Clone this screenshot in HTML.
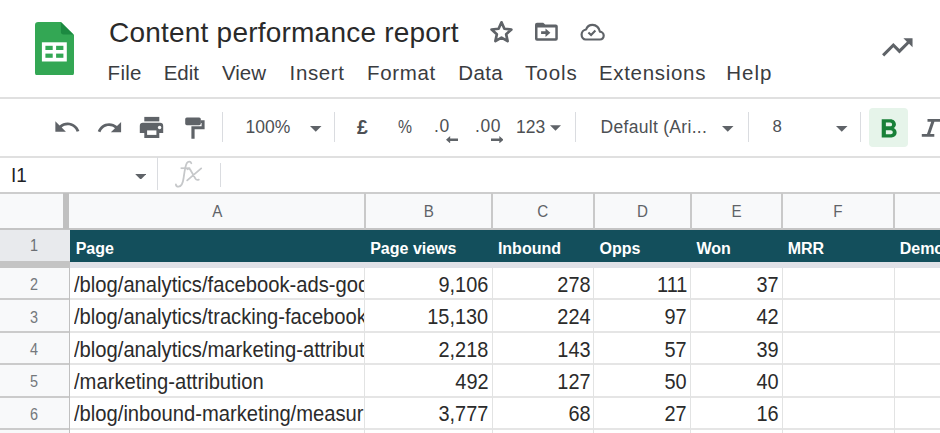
<!DOCTYPE html>
<html><head><meta charset="utf-8">
<style>
html,body{margin:0;padding:0;width:940px;height:433px;overflow:hidden;background:#fff;}
body{position:relative;font-family:"Liberation Sans",sans-serif;}
.t{position:absolute;line-height:1;white-space:nowrap;}
.r{position:absolute;display:block;}
#w{position:absolute;left:0;top:0;width:940px;height:433px;overflow:hidden;background:#fff;}
</style></head><body>
<div id="w"><svg class="r" style="left:35.2px;top:21.5px" width="39" height="53.8" viewBox="0 0 39 53.8">
<path d="M3.2 0 H25.9 L39 13 V50.6 Q39 53.8 35.8 53.8 H3.2 Q0 53.8 0 50.6 V3.2 Q0 0 3.2 0 Z" fill="#33a754"/>
<path d="M25.9 0 L39 13 V12.4 H28.5 Q25.9 12.4 25.9 9.8 Z" fill="#1c8a41"/>
<rect x="6.9" y="20.3" width="24.9" height="19.2" fill="#fff"/>
<rect x="10.4" y="23.8" width="7.3" height="4.2" fill="#33a754"/>
<rect x="21.1" y="23.8" width="7.3" height="4.2" fill="#33a754"/>
<rect x="10.4" y="31.6" width="7.3" height="4.2" fill="#33a754"/>
<rect x="21.1" y="31.6" width="7.3" height="4.2" fill="#33a754"/>
</svg>
<div class="t" style="left:109.00px;top:18.59px;font-size:28px;color:#2a2a2a;font-weight:normal;letter-spacing:0.22px;">Content performance report</div>
<svg class="r" style="left:486px;top:18px" width="32" height="28" viewBox="0 0 32 28">
<polygon points="15.50,4.30 18.38,10.74 25.39,11.49 20.16,16.21 21.61,23.11 15.50,19.60 9.39,23.11 10.84,16.21 5.61,11.49 12.62,10.74" fill="none" stroke="#5f6368" stroke-width="2.7" stroke-linejoin="round"/></svg>
<svg class="r" style="left:530px;top:18px" width="32" height="27" viewBox="0 0 32 27">
<path fill="#5f6368" d="M7 4.7 H13.2 L15.2 6.5 H25.8 Q27.8 6.5 27.8 8.5 V20.8 Q27.8 22.8 25.8 22.8 H7 Q5 22.8 5 20.8 V6.7 Q5 4.7 7 4.7 Z M7.5 9.4 V20.3 H25.3 V9.4 Z"/>
<path fill="#5f6368" d="M11.1 13.3 H15.5 V10.4 L20.4 14.65 L15.5 18.9 V16 H11.1 Z"/>
</svg>
<svg class="r" style="left:576px;top:18px" width="32" height="28" viewBox="0 0 32 28">
<path fill="none" stroke="#5f6368" stroke-width="2.2" stroke-linejoin="round" d="M9.6 21.5 H24 C26.1 21.5 27.7 19.8 27.7 17.6 C27.7 15.5 26 13.8 23.9 13.7 C23.4 9.9 20.3 6.9 16.6 6.9 C13.6 6.9 11 8.8 10.1 11.5 C7.6 11.8 5.6 14 5.6 16.6 C5.6 19.3 7.4 21.5 9.6 21.5 Z"/>
<path fill="none" stroke="#5f6368" stroke-width="2.1" d="M12.4 14.4 L15.1 17 L19.4 12.6"/>
</svg>
<div class="t" style="left:107.60px;top:63.04px;font-size:20.5px;color:#3a3c3f;font-weight:normal;letter-spacing:0.3px;">File</div>
<div class="t" style="left:163.70px;top:63.04px;font-size:20.5px;color:#3a3c3f;font-weight:normal;letter-spacing:0.0px;">Edit</div>
<div class="t" style="left:222.00px;top:63.04px;font-size:20.5px;color:#3a3c3f;font-weight:normal;letter-spacing:0.0px;">View</div>
<div class="t" style="left:289.60px;top:63.04px;font-size:20.5px;color:#3a3c3f;font-weight:normal;letter-spacing:0.6px;">Insert</div>
<div class="t" style="left:367.00px;top:63.04px;font-size:20.5px;color:#3a3c3f;font-weight:normal;letter-spacing:0.65px;">Format</div>
<div class="t" style="left:458.30px;top:63.04px;font-size:20.5px;color:#3a3c3f;font-weight:normal;letter-spacing:0.35px;">Data</div>
<div class="t" style="left:525.10px;top:63.04px;font-size:20.5px;color:#3a3c3f;font-weight:normal;letter-spacing:0.95px;">Tools</div>
<div class="t" style="left:598.90px;top:63.04px;font-size:20.5px;color:#3a3c3f;font-weight:normal;letter-spacing:0.7px;">Extensions</div>
<div class="t" style="left:726.30px;top:63.04px;font-size:20.5px;color:#3a3c3f;font-weight:normal;letter-spacing:0.95px;">Help</div>
<svg class="r" style="left:879.2px;top:28.6px" width="36.6" height="36.6" viewBox="0 0 24 24">
<path fill="#5f6368" d="M16 6l2.29 2.29-4.88 4.88-4-4L2 16.59 3.41 18l6-6 4 4 6.3-6.29L22 12V6z"/></svg>
<div class="r" style="left:0px;top:97.1px;width:940px;height:1.5px;background:#e0e0e0;"></div>
<div class="r" style="left:0px;top:156px;width:940px;height:1.5px;background:#e0e0e0;"></div>
<svg class="r" style="left:53.1px;top:113.1px" width="28.2" height="28.2" viewBox="0 0 24 24">
<path fill="#5f6368" d="M12.5 8c-2.65 0-5.05.99-6.9 2.6L2 7v9h9l-3.62-3.62c1.39-1.16 3.16-1.88 5.12-1.88 3.54 0 6.55 2.31 7.6 5.5l2.37-.78C21.08 11.03 17.15 8 12.5 8z"/></svg>
<svg class="r" style="left:96.2px;top:113.5px" width="27.4" height="27.4" viewBox="0 0 24 24">
<path fill="#5f6368" d="M18.4 10.6C16.55 8.99 14.15 8 11.5 8c-4.65 0-8.58 3.03-9.960 7.22L3.9 16c1.05-3.190 4.05-5.5 7.6-5.5 1.95 0 3.73.72 5.12 1.88L13 16h9V7l-3.6 3.6z"/></svg>
<svg class="r" style="left:139px;top:116px" width="26" height="23" viewBox="0 0 26 23">
<rect x="5.3" y="0.9" width="15" height="4.5" fill="#5f6368"/>
<path fill="#5f6368" d="M3.9 6.7 H21 Q24.2 6.7 24.2 9.9 V17 H20.3 V22 H5.3 V17 H0.8 V9.9 Q0.8 6.7 3.9 6.7 Z"/>
<rect x="8.1" y="14.4" width="9.3" height="4.5" fill="#fff"/>
<circle cx="20.6" cy="11.5" r="1.7" fill="#fff"/>
</svg>
<svg class="r" style="left:180px;top:112px" width="30" height="30" viewBox="0 0 30 30">
<rect x="5.2" y="5.5" width="15.6" height="7.7" rx="1.6" fill="#5f6368"/>
<path fill="#5f6368" d="M20.5 8.3 H24.6 V17.3 H14.6 V26.7 H11.4 V14.3 H21.6 V10.9 H20.5 Z"/>
</svg>
<div class="r" style="left:222px;top:112px;width:1px;height:30px;background:#dadce0;"></div>
<div class="t" style="left:245.50px;top:118.88px;font-size:17.5px;color:#4d5054;font-weight:normal;">100%</div>
<svg class="r" style="left:310px;top:126px" width="11.5" height="5.8" viewBox="0 0 10 5"><path d="M0 0 L10 0 L5 5 Z" fill="#5f6368"/></svg>
<div class="r" style="left:334px;top:112px;width:1px;height:30px;background:#dadce0;"></div>
<div class="t" style="left:357.00px;top:118.29px;font-size:19.5px;color:#4d5054;font-weight:normal;"><b>£</b></div>
<div class="t" style="left:398.00px;top:118.88px;font-size:17.5px;color:#4d5054;font-weight:normal;transform:scaleX(0.9);transform-origin:0 0;">%</div>
<div class="t" style="left:433.80px;top:117.28px;font-size:18.8px;color:#4d5054;font-weight:normal;transform:scaleX(0.93);transform-origin:0 0;letter-spacing:0.6px;">.0</div>
<svg class="r" style="left:445.5px;top:135.5px" width="12.5" height="7.5" viewBox="0 0 12 7"><path fill="#5f6368" d="M0 3.5 L4 0 V2.3 H12 V4.7 H4 V7 Z"/></svg>
<div class="t" style="left:474.80px;top:117.28px;font-size:18.8px;color:#4d5054;font-weight:normal;transform:scaleX(0.93);transform-origin:0 0;letter-spacing:0.6px;">.00</div>
<svg class="r" style="left:490.5px;top:135.5px" width="12.5" height="7.5" viewBox="0 0 12 7"><path fill="#5f6368" d="M12 3.5 L8 0 V2.3 H0 V4.7 H8 V7 Z"/></svg>
<div class="t" style="left:516.00px;top:118.68px;font-size:17.5px;color:#4d5054;font-weight:normal;">123</div>
<svg class="r" style="left:549.6px;top:125.4px" width="11" height="6" viewBox="0 0 10 5"><path d="M0 0 L10 0 L5 5 Z" fill="#5f6368"/></svg>
<div class="r" style="left:575px;top:112px;width:1px;height:30px;background:#dadce0;"></div>
<div class="t" style="left:600.50px;top:118.88px;font-size:17.5px;color:#4d5054;font-weight:normal;letter-spacing:0.3px;">Default (Ari...</div>
<svg class="r" style="left:722px;top:126px" width="11.5" height="5.8" viewBox="0 0 10 5"><path d="M0 0 L10 0 L5 5 Z" fill="#5f6368"/></svg>
<div class="r" style="left:747.5px;top:112px;width:1px;height:30px;background:#dadce0;"></div>
<div class="t" style="left:772.40px;top:119.28px;font-size:16.8px;color:#4d5054;font-weight:normal;">8</div>
<svg class="r" style="left:836px;top:126px" width="11.5" height="5.8" viewBox="0 0 10 5"><path d="M0 0 L10 0 L5 5 Z" fill="#5f6368"/></svg>
<div class="r" style="left:860px;top:112px;width:1px;height:30px;background:#dadce0;"></div>
<div class="r" style="left:869px;top:107.6px;width:39.3px;height:39.4px;background:#e6f4ea;border-radius:4px;"></div>
<svg class="r" style="left:871.8px;top:113.5px" width="33.3" height="31.2" viewBox="0 0 24 24" preserveAspectRatio="none">
<path fill="#188038" d="M15.6 10.79c.97-.67 1.65-1.77 1.65-2.79 0-2.26-1.75-4-4-4H7v14h7.04c2.09 0 3.71-1.7 3.71-3.790 0-1.52-.86-2.82-2.15-3.42zM10 6.5h3c.83 0 1.5.67 1.5 1.5s-.67 1.5-1.5 1.5h-3v-3zm3.5 9H10v-3h3.5c.83 0 1.5.67 1.5 1.5s-.67 1.5-1.5 1.5z"/></svg>
<svg class="r" style="left:918px;top:116px" width="22" height="24" viewBox="0 0 22 24">
<path fill="#5f6368" d="M9.5 3 H27 V5.7 H9.5 Z M3.8 18 H16.3 V20.7 H3.8 Z M13.2 5.7 H16.4 L12.2 18 H9 Z"/></svg>
<div class="t" style="left:10.70px;top:164.42px;font-size:21px;color:#202124;font-weight:normal;transform:scaleX(0.9);transform-origin:0 0;">I1</div>
<svg class="r" style="left:134.8px;top:173.8px" width="11.5" height="5.6" viewBox="0 0 10 5"><path d="M0 0 L10 0 L5 5 Z" fill="#5f6368"/></svg>
<div class="r" style="left:156.5px;top:157px;width:1.2px;height:33px;background:#dadce0;"></div>
<svg class="r" style="left:165px;top:155px" width="45" height="37" viewBox="0 0 45 37">
<path fill="none" stroke="#c6c8ca" stroke-width="1.8" stroke-linecap="round" d="M26.3 8.2 C25.6 6.3 23.2 6.2 21.9 8 C20.3 10.3 19.6 16 18.6 23 C17.8 29 16.4 31.6 13.6 31.6 C12 31.6 10.9 30.6 10.9 29.4"/>
<path fill="none" stroke="#c6c8ca" stroke-width="1.7" d="M15.6 13.2 H25.2"/>
<path fill="none" stroke="#c6c8ca" stroke-width="1.8" stroke-linecap="round" d="M22.4 14.2 C23.6 13.4 24.6 13.6 25.3 14.8 L30.4 23.6 C31.2 25 32.4 25.2 33.8 24.6 M36.2 13.4 L22.2 25.4"/>
</svg>
<div class="r" style="left:220px;top:163px;width:1px;height:24px;background:#dadce0;"></div>
<div class="r" style="left:0px;top:193px;width:940px;height:35px;background:#f8f9fa;"></div>
<div class="r" style="left:0px;top:192px;width:940px;height:2px;background:#cdcdcd;"></div>
<div class="r" style="left:0px;top:228px;width:940px;height:2px;background:#c4c4c4;"></div>
<div class="r" style="left:63px;top:193px;width:6.3px;height:36px;background:#c0c0c0;"></div>
<div class="r" style="left:363.5px;top:193px;width:2px;height:36px;background:#c9c9c9;"></div>
<div class="r" style="left:491.2px;top:193px;width:2px;height:36px;background:#c9c9c9;"></div>
<div class="r" style="left:592.8px;top:193px;width:2px;height:36px;background:#c9c9c9;"></div>
<div class="r" style="left:689.7px;top:193px;width:2px;height:36px;background:#c9c9c9;"></div>
<div class="r" style="left:781px;top:193px;width:2px;height:36px;background:#c9c9c9;"></div>
<div class="r" style="left:893px;top:193px;width:2px;height:36px;background:#c9c9c9;"></div>
<div class="t" style="left:70px;width:294.5px;text-align:center;top:202.83px;font-size:16.5px;color:#5f6368;transform:scaleX(0.92)">A</div>
<div class="t" style="left:364.5px;width:127.69999999999999px;text-align:center;top:202.83px;font-size:16.5px;color:#5f6368;transform:scaleX(0.92)">B</div>
<div class="t" style="left:492.2px;width:101.59999999999997px;text-align:center;top:202.83px;font-size:16.5px;color:#5f6368;transform:scaleX(0.92)">C</div>
<div class="t" style="left:593.8px;width:96.90000000000009px;text-align:center;top:202.83px;font-size:16.5px;color:#5f6368;transform:scaleX(0.92)">D</div>
<div class="t" style="left:690.7px;width:91.29999999999995px;text-align:center;top:202.83px;font-size:16.5px;color:#5f6368;transform:scaleX(0.92)">E</div>
<div class="t" style="left:782px;width:112px;text-align:center;top:202.83px;font-size:16.5px;color:#5f6368;transform:scaleX(0.92)">F</div>
<div class="r" style="left:0px;top:229.8px;width:70px;height:32px;background:#e8eaed;"></div>
<div class="r" style="left:70px;top:229.8px;width:870px;height:32px;background:#134f5c;"></div>
<div class="t" style="left:75.70px;top:240.75px;font-size:16px;color:#ffffff;font-weight:bold;">Page</div>
<div class="t" style="left:370.20px;top:240.75px;font-size:16px;color:#ffffff;font-weight:bold;">Page views</div>
<div class="t" style="left:497.90px;top:240.75px;font-size:16px;color:#ffffff;font-weight:bold;">Inbound</div>
<div class="t" style="left:599.50px;top:240.75px;font-size:16px;color:#ffffff;font-weight:bold;">Opps</div>
<div class="t" style="left:696.40px;top:240.75px;font-size:16px;color:#ffffff;font-weight:bold;">Won</div>
<div class="t" style="left:787.70px;top:240.75px;font-size:16px;color:#ffffff;font-weight:bold;">MRR</div>
<div class="t" style="left:899.70px;top:240.75px;font-size:16px;color:#ffffff;font-weight:bold;">Demo</div>
<div class="t" style="left:0;width:68px;text-align:center;top:238.45px;font-size:16px;color:#6b6f74;transform:scaleX(0.9)">1</div>
<div class="r" style="left:0px;top:261.2px;width:70px;height:6.5px;background:#c4c4c4;"></div>
<div class="r" style="left:70px;top:261.7px;width:870px;height:6px;background:#dfe1e7;"></div>
<div class="r" style="left:0px;top:267.7px;width:68.5px;height:170px;background:#f8f9fa;"></div>
<div class="r" style="left:0px;top:298px;width:69px;height:2px;background:#cbcbcb;"></div>
<div class="r" style="left:70px;top:298px;width:870px;height:2px;background:#e5e5e5;"></div>
<div class="t" style="left:0;width:68px;text-align:center;top:277.25px;font-size:16px;color:#74787c;transform:scaleX(0.9)">2</div>
<div class="r" style="left:70px;top:267.7px;width:294.5px;height:31.80000000000001px;overflow:hidden"><div class="t" style="left:4.3px;top:7.37px;font-size:21.3px;color:#2b2b2b;transform:scaleX(0.948);transform-origin:0 0">/blog/analytics/facebook-ads-goodbye</div></div>
<div class="t" style="right:451.40px;top:275.07px;font-size:21.3px;color:#2b2b2b;font-weight:normal;transform:scaleX(0.935);transform-origin:100% 0;">9,106</div>
<div class="t" style="right:349.80px;top:275.07px;font-size:21.3px;color:#2b2b2b;font-weight:normal;transform:scaleX(0.935);transform-origin:100% 0;">278</div>
<div class="t" style="right:252.90px;top:275.07px;font-size:21.3px;color:#2b2b2b;font-weight:normal;transform:scaleX(0.935);transform-origin:100% 0;">111</div>
<div class="t" style="right:161.60px;top:275.07px;font-size:21.3px;color:#2b2b2b;font-weight:normal;transform:scaleX(0.935);transform-origin:100% 0;">37</div>
<div class="r" style="left:0px;top:331px;width:69px;height:2px;background:#cbcbcb;"></div>
<div class="r" style="left:70px;top:331px;width:870px;height:2px;background:#e5e5e5;"></div>
<div class="t" style="left:0;width:68px;text-align:center;top:309.65px;font-size:16px;color:#74787c;transform:scaleX(0.9)">3</div>
<div class="r" style="left:70px;top:299.5px;width:294.5px;height:32.39999999999998px;overflow:hidden"><div class="t" style="left:4.3px;top:7.97px;font-size:21.3px;color:#2b2b2b;transform:scaleX(0.948);transform-origin:0 0">/blog/analytics/tracking-facebook-ads</div></div>
<div class="t" style="right:451.40px;top:307.47px;font-size:21.3px;color:#2b2b2b;font-weight:normal;transform:scaleX(0.935);transform-origin:100% 0;">15,130</div>
<div class="t" style="right:349.80px;top:307.47px;font-size:21.3px;color:#2b2b2b;font-weight:normal;transform:scaleX(0.935);transform-origin:100% 0;">224</div>
<div class="t" style="right:252.90px;top:307.47px;font-size:21.3px;color:#2b2b2b;font-weight:normal;transform:scaleX(0.935);transform-origin:100% 0;">97</div>
<div class="t" style="right:161.60px;top:307.47px;font-size:21.3px;color:#2b2b2b;font-weight:normal;transform:scaleX(0.935);transform-origin:100% 0;">42</div>
<div class="r" style="left:0px;top:363px;width:69px;height:2px;background:#cbcbcb;"></div>
<div class="r" style="left:70px;top:363px;width:870px;height:2px;background:#e5e5e5;"></div>
<div class="t" style="left:0;width:68px;text-align:center;top:341.95px;font-size:16px;color:#74787c;transform:scaleX(0.9)">4</div>
<div class="r" style="left:70px;top:331.9px;width:294.5px;height:32.30000000000001px;overflow:hidden"><div class="t" style="left:4.3px;top:7.87px;font-size:21.3px;color:#2b2b2b;transform:scaleX(0.948);transform-origin:0 0">/blog/analytics/marketing-attribution</div></div>
<div class="t" style="right:451.40px;top:339.77px;font-size:21.3px;color:#2b2b2b;font-weight:normal;transform:scaleX(0.935);transform-origin:100% 0;">2,218</div>
<div class="t" style="right:349.80px;top:339.77px;font-size:21.3px;color:#2b2b2b;font-weight:normal;transform:scaleX(0.935);transform-origin:100% 0;">143</div>
<div class="t" style="right:252.90px;top:339.77px;font-size:21.3px;color:#2b2b2b;font-weight:normal;transform:scaleX(0.935);transform-origin:100% 0;">57</div>
<div class="t" style="right:161.60px;top:339.77px;font-size:21.3px;color:#2b2b2b;font-weight:normal;transform:scaleX(0.935);transform-origin:100% 0;">39</div>
<div class="r" style="left:0px;top:396px;width:69px;height:2px;background:#cbcbcb;"></div>
<div class="r" style="left:70px;top:396px;width:870px;height:2px;background:#e5e5e5;"></div>
<div class="t" style="left:0;width:68px;text-align:center;top:374.35px;font-size:16px;color:#74787c;transform:scaleX(0.9)">5</div>
<div class="r" style="left:70px;top:364.2px;width:294.5px;height:32.400000000000034px;overflow:hidden"><div class="t" style="left:4.3px;top:7.97px;font-size:21.3px;color:#2b2b2b;transform:scaleX(0.948);transform-origin:0 0">/marketing-attribution</div></div>
<div class="t" style="right:451.40px;top:372.17px;font-size:21.3px;color:#2b2b2b;font-weight:normal;transform:scaleX(0.935);transform-origin:100% 0;">492</div>
<div class="t" style="right:349.80px;top:372.17px;font-size:21.3px;color:#2b2b2b;font-weight:normal;transform:scaleX(0.935);transform-origin:100% 0;">127</div>
<div class="t" style="right:252.90px;top:372.17px;font-size:21.3px;color:#2b2b2b;font-weight:normal;transform:scaleX(0.935);transform-origin:100% 0;">50</div>
<div class="t" style="right:161.60px;top:372.17px;font-size:21.3px;color:#2b2b2b;font-weight:normal;transform:scaleX(0.935);transform-origin:100% 0;">40</div>
<div class="r" style="left:0px;top:428px;width:69px;height:2px;background:#cbcbcb;"></div>
<div class="r" style="left:70px;top:428px;width:870px;height:2px;background:#e5e5e5;"></div>
<div class="t" style="left:0;width:68px;text-align:center;top:406.65px;font-size:16px;color:#74787c;transform:scaleX(0.9)">6</div>
<div class="r" style="left:70px;top:396.6px;width:294.5px;height:32.299999999999955px;overflow:hidden"><div class="t" style="left:4.3px;top:7.87px;font-size:21.3px;color:#2b2b2b;transform:scaleX(0.948);transform-origin:0 0">/blog/inbound-marketing/measure</div></div>
<div class="t" style="right:451.40px;top:404.47px;font-size:21.3px;color:#2b2b2b;font-weight:normal;transform:scaleX(0.935);transform-origin:100% 0;">3,777</div>
<div class="t" style="right:349.80px;top:404.47px;font-size:21.3px;color:#2b2b2b;font-weight:normal;transform:scaleX(0.935);transform-origin:100% 0;">68</div>
<div class="t" style="right:252.90px;top:404.47px;font-size:21.3px;color:#2b2b2b;font-weight:normal;transform:scaleX(0.935);transform-origin:100% 0;">27</div>
<div class="t" style="right:161.60px;top:404.47px;font-size:21.3px;color:#2b2b2b;font-weight:normal;transform:scaleX(0.935);transform-origin:100% 0;">16</div>
<div class="r" style="left:68.5px;top:267.7px;width:1.2px;height:170px;background:#c0c0c0;"></div>
<div class="r" style="left:364.0px;top:267.7px;width:1px;height:170px;background:#e2e3e3;"></div>
<div class="r" style="left:491.7px;top:267.7px;width:1px;height:170px;background:#e2e3e3;"></div>
<div class="r" style="left:593.3px;top:267.7px;width:1px;height:170px;background:#e2e3e3;"></div>
<div class="r" style="left:690.2px;top:267.7px;width:1px;height:170px;background:#e2e3e3;"></div>
<div class="r" style="left:781.5px;top:267.7px;width:1px;height:170px;background:#e2e3e3;"></div>
<div class="r" style="left:893.5px;top:267.7px;width:1px;height:170px;background:#e2e3e3;"></div>
</div></body></html>
